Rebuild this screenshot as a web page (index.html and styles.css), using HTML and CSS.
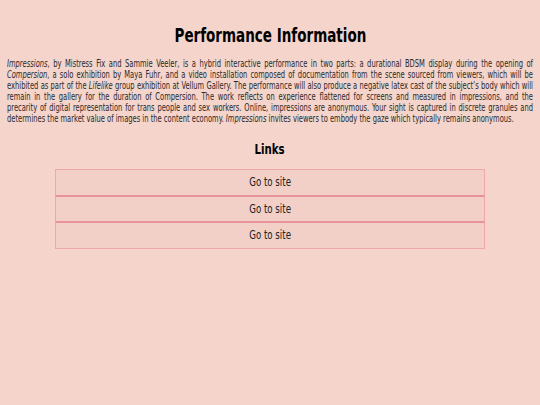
FILE: index.html
```html
<!DOCTYPE html>
<html>
<head>
<meta charset="utf-8">
<link rel="stylesheet" href="styles.css">
</head>
<body>
<main class="page">
  <h1 class="title"><span class="narrow">Performance Information</span></h1>
  <div class="desc-wrap">
    <p class="desc">
      <span class="line"><em>Impressions</em>, by Mistress Fix and Sammie Veeler, is a hybrid interactive performance in two parts: a durational BDSM display during the opening of</span>
      <span class="line"><em>Compersion</em>, a solo exhibition by Maya Fuhr, and a video installation composed of documentation from the scene sourced from viewers, which will be</span>
      <span class="line">exhibited as part of the <em>Lifelike</em> group exhibition at Vellum Gallery. The performance will also produce a negative latex cast of the subject’s body which will</span>
      <span class="line">remain in the gallery for the duration of Compersion. The work reflects on experience flattened for screens and measured in impressions, and the</span>
      <span class="line">precarity of digital representation for trans people and sex workers. Online, impressions are anonymous. Your sight is captured in discrete granules and</span>
      <span class="line last">determines the market value of images in the content economy. <em>Impressions</em> invites viewers to embody the gaze which typically remains anonymous.</span>
    </p>
  </div>
  <h2 class="subtitle"><span class="narrow">Links</span></h2>
  <div class="links">
    <a class="link" href="#"><span class="narrow">Go to site</span></a>
    <a class="link" href="#"><span class="narrow">Go to site</span></a>
    <a class="link" href="#"><span class="narrow">Go to site</span></a>
  </div>
</main>
</body>
</html>
```
FILE: styles.css
```css
html, body {
  margin: 0;
  padding: 0;
  background: #f4d4cb;
  overflow: hidden;
}
body {
  font-family: "DejaVu Sans Condensed", "DejaVu Sans", sans-serif;
  color: #1a1a1a;
}
.page {
  padding: 23px 7px 0;
}
.narrow {
  display: inline-block;
  transform: scaleX(0.79);
  transform-origin: center;
  white-space: nowrap;
}
.title {
  margin: 0;
  text-align: center;
  font-size: 19px;
  font-weight: bold;
  line-height: 24px;
  color: #000;
}
.desc-wrap {
  margin-top: 11px;
  width: 526px;
  height: 66px;
}
.desc {
  margin: 0;
  width: 674px;
  font-size: 9.6px;
  line-height: 11px;
  color: #2a2a2a;
  transform: scaleX(0.7804);
  transform-origin: left top;
}
.line {
  display: block;
  white-space: nowrap;
  text-align: justify;
  text-align-last: justify;
}
.line.last {
  text-align-last: left;
}
.subtitle {
  margin: 16px 0 0;
  text-align: center;
  font-size: 14px;
  font-weight: bold;
  line-height: 18px;
  color: #000;
}
.subtitle .narrow {
  transform: scaleX(0.81);
}
.links {
  width: 430px;
  margin: 11px auto 0;
  display: flex;
  flex-direction: column;
}
.link {
  display: block;
  height: 24.5px;
  line-height: 24.5px;
  border: 1px solid #efa6ac;
  background: #f3d0c7;
  text-align: center;
  font-size: 12px;
  color: #222;
  text-decoration: none;
}
.link:not(:last-child) {
  border-bottom-color: #e8929a;
}
.link:not(:first-child) {
  border-top-color: #e8929a;
}
.link .narrow {
  transform: scaleX(0.8);
}
```
